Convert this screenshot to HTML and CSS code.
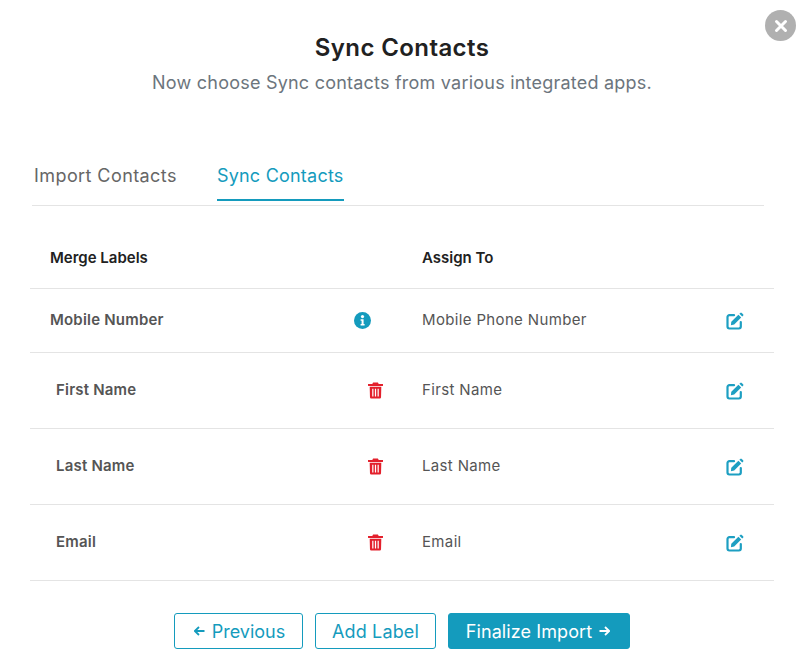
FILE: index.html
```html
<!DOCTYPE html>
<html lang="en">
	<head>
		<meta charset="UTF-8" />
		<title>Sync Contacts</title>
		<link rel="stylesheet" href="styles.css">
	</head>
	<body>
		<svg width="0" height="0" class="defs">
			<symbol id="icon-edit" viewBox="0 0 18 18">
				<path d="M8 3.200H3.400A1.900 1.900 0 0 0 1.500 5.100v9.500a1.900 1.900 0 0 0 1.900 1.900h9.500a1.900 1.900 0 0 0 1.900-1.900V10" fill="none" stroke="currentColor" stroke-width="2.200" stroke-linecap="round"/>
				<path d="M5.300 9.700 12.400 2.800l2.800 2.800-7 7-3.300.6z" fill="currentColor"/>
				<path d="M13.400 1.800l.9-.9a1 1 0 0 1 1.400 0l1.400 1.400a1 1 0 0 1 0 1.400l-.9.9z" fill="currentColor"/>
			</symbol>
			<symbol id="icon-trash" viewBox="0 0 16 17">
				<path d="M5.400 0h5.200l.8 1.500H15.500a.8.8 0 0 1 0 2.100H.5a.8.8 0 0 1 0-2.100h4.100z" fill="currentColor"/>
				<path fill-rule="evenodd" d="M1.800 4.600h12.400l-.3 11a1.400 1.400 0 0 1-1.400 1.400H3.500a1.400 1.400 0 0 1-1.400-1.400zM4.500 6.600v8.300h1.300V6.600zM7.350 6.600v8.300h1.300V6.600zM10.200 6.600v8.300h1.300V6.600z" fill="currentColor"/>
			</symbol>
			<symbol id="icon-arrow" viewBox="0 0 11 10">
				<path d="M.5 5h9.800M6 1 10.200 5 6 9" fill="none" stroke="currentColor" stroke-width="1.800"/>
			</symbol>
		</svg>

		<button class="close-btn" aria-label="Close">
			<svg width="14" height="14" viewBox="0 0 14 14"><path d="M2.500 2.500l9 9M11.500 2.500l-9 9" stroke="#fff" stroke-width="3" stroke-linecap="round"/></svg>
		</button>

		<header class="heading">
			<h1>Sync Contacts</h1>
			<p>Now choose Sync contacts from various integrated apps.</p>
		</header>

		<nav class="tabs">
			<a class="tab">Import Contacts</a>
			<a class="tab active">Sync Contacts</a>
		</nav>

		<div class="labels">
			<div class="row head">
				<div class="col-label">Merge Labels</div>
				<div class="col-assign">Assign To</div>
			</div>
			<div class="row first">
				<div class="col-label">Mobile Number</div>
				<div class="col-icon info">
					<svg width="17" height="17" viewBox="0 0 17 17">
						<circle cx="8.500" cy="8.500" r="8.500" fill="currentColor"/>
						<circle cx="8.500" cy="4.600" r="1.600" fill="#fff"/>
						<path d="M6.600 7.200h3v4.700h1v1.500H6.600v-1.500h1v-3.200h-1z" fill="#fff"/>
					</svg>
				</div>
				<div class="col-assign">Mobile Phone Number</div>
				<div class="col-edit"><svg width="18" height="18"><use href="#icon-edit"/></svg></div>
			</div>
			<div class="row sub">
				<div class="col-label">First Name</div>
				<div class="col-icon trash"><svg width="15" height="17"><use href="#icon-trash"/></svg></div>
				<div class="col-assign">First Name</div>
				<div class="col-edit"><svg width="18" height="18"><use href="#icon-edit"/></svg></div>
			</div>
			<div class="row sub">
				<div class="col-label">Last Name</div>
				<div class="col-icon trash"><svg width="15" height="17"><use href="#icon-trash"/></svg></div>
				<div class="col-assign">Last Name</div>
				<div class="col-edit"><svg width="18" height="18"><use href="#icon-edit"/></svg></div>
			</div>
			<div class="row sub">
				<div class="col-label">Email</div>
				<div class="col-icon trash"><svg width="15" height="17"><use href="#icon-trash"/></svg></div>
				<div class="col-assign">Email</div>
				<div class="col-edit"><svg width="18" height="18"><use href="#icon-edit"/></svg></div>
			</div>
		</div>

		<div class="actions">
			<button class="btn prev"><svg class="flip" width="11" height="10"><use href="#icon-arrow"/></svg>Previous</button>
			<button class="btn add">Add Label</button>
			<button class="btn finalize">Finalize Import<svg width="11" height="10"><use href="#icon-arrow"/></svg></button>
		</div>
	</body>
</html>
```

FILE: styles.css
```css
* {
	box-sizing: border-box;
}
body {
	position: relative;
	width: 806px;
	height: 670px;
	margin: 0;
	padding: 33px 32px 0 30px;
	overflow: hidden;
	background: #fff;
	font-family: Inter, "Noto Sans", sans-serif;
	color: #555;
}
.defs {
	position: absolute;
}
.close-btn {
	position: absolute;
	top: 10px;
	left: 765px;
	width: 31px;
	height: 31px;
	padding: 0;
	border: 0;
	border-radius: 50%;
	background: #b0b0b0;
	display: flex;
	align-items: center;
	justify-content: center;
}
.heading {
	text-align: center;
}
.heading h1 {
	margin: 0;
	font-size: 24px;
	line-height: 30px;
	font-weight: 600;
	letter-spacing: 0.4px;
	color: #212121;
}
.heading p {
	margin: 5px 0 0;
	font-size: 18px;
	line-height: 30px;
	letter-spacing: 0.22px;
	color: #6c757d;
}
.tabs {
	display: flex;
	gap: 40px;
	margin: 53px 10px 0 2px;
	padding: 10px 0 0 2px;
	height: 55px;
	border-bottom: 1px solid #e4e4e4;
}
.tab {
	font-size: 18px;
	line-height: 30px;
	letter-spacing: 0.42px;
	color: #666;
}
.tab.active {
	color: #149bbd;
	border-bottom: 2px solid #149bbd;
	height: 40px;
	letter-spacing: 0.22px;
}
.row {
	display: flex;
	align-items: center;
	border-bottom: 1px solid #e4e4e4;
	height: 76px;
	font-size: 15px;
}
.row.head {
	height: 83px;
	padding-top: 20px;
	font-weight: 600;
	color: #212121;
}
.row.first {
	height: 64px;
}
.col-label {
	width: 312px;
	padding-left: 20px;
	font-weight: 600;
	letter-spacing: 0.2px;
}
.row.head .col-label {
	width: 392px;
	letter-spacing: 0;
}
.row.sub .col-label {
	padding-left: 26px;
}
.row.first .col-label,
.row.first .col-assign {
	margin-bottom: 2px;
}
.row.sub .col-label,
.row.sub .col-assign {
	margin-bottom: 3px;
}
.col-icon {
	width: 80px;
	display: flex;
}
.info {
	color: #149bbd;
	padding-left: 12px;
}
.trash {
	color: #e3202c;
	padding-left: 26px;
}
.col-assign {
	width: 304px;
	letter-spacing: 0.35px;
}
.row.head .col-assign {
	letter-spacing: 0;
}
.col-edit {
	color: #1d9fc2;
	display: flex;
}
.actions {
	display: flex;
	justify-content: center;
	gap: 12px;
	margin-top: 32px;
}
.btn {
	display: flex;
	align-items: center;
	justify-content: center;
	gap: 7px;
	height: 36px;
	padding: 0;
	border: 1px solid #149bbd;
	border-radius: 3px;
	background: #fff;
	color: #149bbd;
	font-family: inherit;
	font-size: 18px;
}
.flip {
	transform: scaleX(-1);
}
.prev {
	width: 129px;
	padding-left: 2px;
}
.add {
	width: 121px;
	letter-spacing: 0.15px;
}
.finalize {
	width: 182px;
	padding-right: 2px;
	background: #149bbd;
	color: #fff;
	letter-spacing: 0.1px;
}
```
